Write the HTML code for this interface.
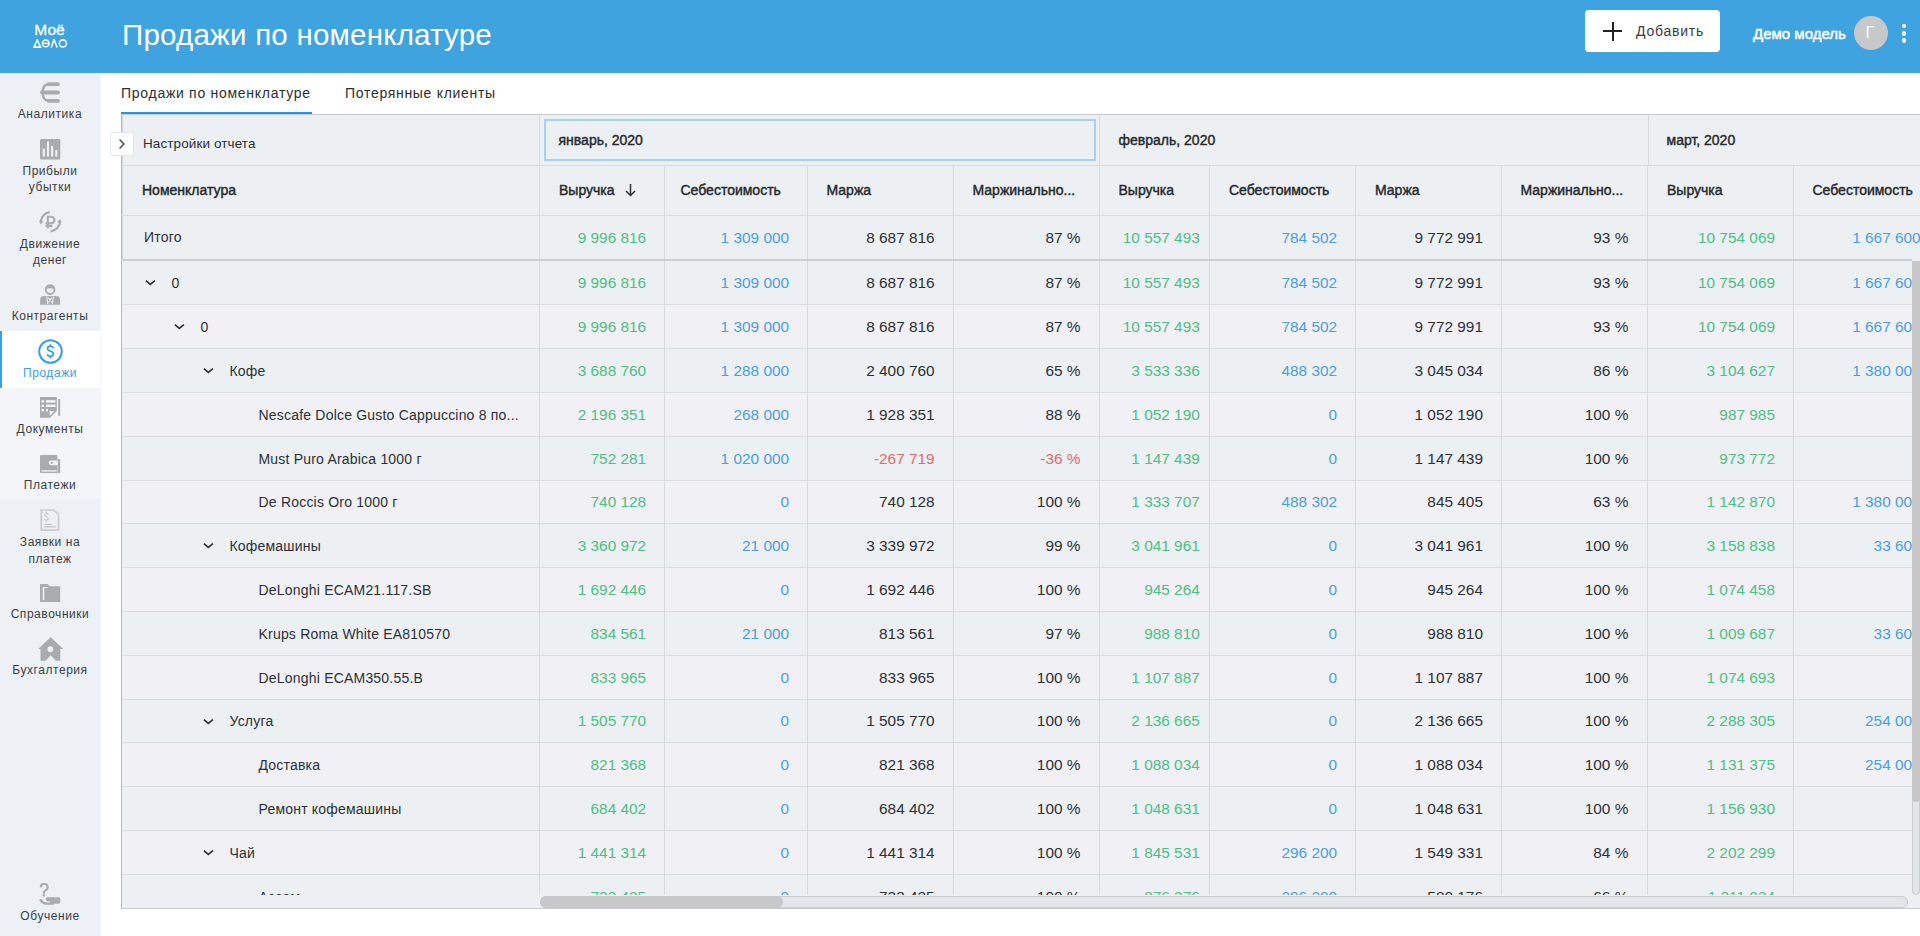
<!DOCTYPE html><html><head><meta charset="utf-8"><title>Продажи по номенклатуре</title><style>
*{box-sizing:border-box;margin:0;padding:0}
html,body{width:1920px;height:936px;overflow:hidden;background:#fff;font-family:"Liberation Sans",sans-serif;color:#2c3035}
.a{position:absolute}
.t{position:absolute;white-space:nowrap;line-height:1}
.hdr{left:0;top:0;width:1920px;height:73px;background:#3ea3de}
.sb{left:0;top:73px;width:100px;height:863px;background:#edf0f4}
.sl{position:absolute;left:0;width:100px;text-align:center;font-size:12px;letter-spacing:0.55px;color:#3b4046;line-height:16.5px;white-space:nowrap}
.ic{position:absolute;left:40px;width:21px;height:21px}
.num{position:absolute;white-space:nowrap;font-size:15.4px;line-height:20px;text-align:right}
.hd{position:absolute;white-space:nowrap;font-size:14px;line-height:16px;color:#25292d;-webkit-text-stroke:0.42px #25292d}
.nm{position:absolute;white-space:nowrap;font-size:14px;letter-spacing:0.2px;line-height:18px;color:#2c3035}
.g{color:#4cbf84} .b{color:#4a9fe0} .r{color:#e86767}
</style></head><body>
<div class="a hdr"></div>
<div class="t" style="left:34.3px;top:21.5px;font-size:15.5px;color:#fff;-webkit-text-stroke:0.3px #fff">Моё</div>
<svg class="a" style="left:33px;top:39px;width:35px;height:9px" viewBox="0 0 35 9"><g fill="none" stroke="#fff" stroke-width="1.55"><path d="M1 8.1L4.2 1L7.5 8.1Z" stroke-linejoin="miter"/><circle cx="12.7" cy="4.4" r="3.35"/><path d="M9.4 4.4H16"/><path d="M18.2 8.6L21.1 0.5L24.1 8.6"/><circle cx="29.9" cy="4.4" r="3.55"/></g></svg>
<div class="t" style="left:122px;top:20px;font-size:29.5px;color:#fff;letter-spacing:0.22px">Продажи по номенклатуре</div>
<div class="a" style="left:1585px;top:10px;width:135px;height:42px;background:#fff;border-radius:4px"></div>
<div class="a" style="left:1603px;top:30px;width:19px;height:2px;background:#222"></div>
<div class="a" style="left:1611.5px;top:22px;width:2px;height:19px;background:#222"></div>
<div class="t" style="left:1636px;top:24px;font-size:14px;letter-spacing:0.78px;color:#383b3f">Добавить</div>
<div class="t" style="left:1753px;top:25.8px;font-size:15px;color:#fff;-webkit-text-stroke:0.45px #fff">Демо модель</div>
<div class="a" style="left:1854px;top:16px;width:34px;height:34px;border-radius:50%;background:#c6c8ca"></div>
<div class="t" style="left:1865.5px;top:25px;font-size:16px;color:#fff">Г</div>
<div class="a" style="left:1901.75px;top:23.75px;width:4.5px;height:4.5px;border-radius:50%;background:#fff"></div>
<div class="a" style="left:1901.75px;top:31.25px;width:4.5px;height:4.5px;border-radius:50%;background:#fff"></div>
<div class="a" style="left:1901.75px;top:38.25px;width:4.5px;height:4.5px;border-radius:50%;background:#fff"></div>
<div class="a sb"></div>
<div class="a" style="left:100px;top:73px;width:2px;height:863px;background:linear-gradient(90deg,#f3f5f8,#fff)"></div>
<div class="a" style="left:0;top:388px;width:100px;height:111px;background:#f3f5f8"></div>
<div class="a" style="left:0;top:331px;width:100px;height:57px;background:#fff"></div>
<div class="a" style="left:0;top:331px;width:2px;height:57px;background:#3a9ee0"></div>
<svg class="a" style="left:39px;top:81px;width:23px;height:23px" viewBox="0 0 23 23"><path d="M9.5 3.2H19M3 11.5H19M9.5 19.8H19" stroke="#a9abae" stroke-width="3.8" stroke-linecap="round"/><path d="M9.5 3.2C4.5 3.5 3.6 8 3.6 11.5S4.5 19.5 9.5 19.8" fill="none" stroke="#a9abae" stroke-width="2.4"/><path d="M1 11.5L4 10v3z" fill="#a9abae"/></svg>
<svg class="a" style="left:40px;top:138.5px;width:21px;height:21px" viewBox="0 0 21 21"><rect x="0" y="0" width="20.3" height="20.5" rx="1.5" fill="#a9abae"/><rect x="2.7" y="9.5" width="2.2" height="8" fill="#edf0f4"/><rect x="6.9" y="2.4" width="2.2" height="15.1" fill="#edf0f4"/><rect x="11" y="6.9" width="2.2" height="10.6" fill="#edf0f4"/><rect x="15.2" y="11.1" width="2.2" height="6.4" fill="#edf0f4"/></svg>
<svg class="a" style="left:39px;top:211px;width:23px;height:22px" viewBox="0 0 23 22"><path d="M1.6 11.5C1.8 6.5 5.5 2 10.8 1.2" fill="none" stroke="#a9abae" stroke-width="2.2"/><path d="M0.2 9.5l1.5 4 2.8-3.3z" fill="#a9abae"/><path d="M21.2 10C21 15 17.5 19.5 11.5 20.5" fill="none" stroke="#a9abae" stroke-width="2.2"/><path d="M22.6 12l-1.5-4-2.8 3.3z" fill="#a9abae"/><path d="M8.8 17.2V5.8h3.4a3.2 3.2 0 0 1 0 6.4H6.6M6.6 14.9h6.8" fill="none" stroke="#a9abae" stroke-width="2.1"/></svg>
<svg class="a" style="left:39px;top:283px;width:23px;height:23px" viewBox="0 0 23 23"><circle cx="11.1" cy="6.6" r="4.4" fill="none" stroke="#a9abae" stroke-width="1.8"/><path d="M6.7 6.3a4.4 4.4 0 0 1 8.8 0c-1.5-1.3-7.3-1.3-8.8 0z" fill="#a9abae"/><path d="M1.1 21.7V17a4 4 0 0 1 4-4h12a4 4 0 0 1 4 4v4.7z" fill="#a9abae"/><path d="M7.8 13.5l1 7.5M14.4 13.5l-1 7.5M9.5 14.5l3.2 5M12.7 14.5l-3.2 5" stroke="#edf0f4" stroke-width="1.1"/></svg>
<svg class="a" style="left:37.5px;top:338.5px;width:25px;height:25px" viewBox="0 0 25 25"><circle cx="12.5" cy="12.5" r="11.3" fill="none" stroke="#3a9ee0" stroke-width="2"/><path d="M15.3 9.2c-.4-1.3-1.5-2-2.9-2-1.7 0-2.9 1-2.9 2.4 0 3.2 5.9 1.8 5.9 5.2 0 1.5-1.3 2.5-3 2.5-1.5 0-2.7-.8-3.1-2.1M12.4 5.2v2M12.4 17.3v2.3" fill="none" stroke="#3a9ee0" stroke-width="1.7"/></svg>
<svg class="a" style="left:40px;top:397px;width:21px;height:21px" viewBox="0 0 21 21"><path d="M0 0H16.8V14L10 20.8H0z" fill="#a9abae"/><rect x="18.2" y="2" width="2" height="16.8" fill="#a9abae"/><rect x="1.6" y="3.2" width="2.4" height="2.4" fill="#f3f5f8"/><rect x="5.9" y="3.2" width="9.6" height="2.4" fill="#f3f5f8"/><rect x="1.6" y="7.6" width="2.4" height="2.4" fill="#f3f5f8"/><rect x="5.9" y="7.6" width="9.6" height="2.4" fill="#f3f5f8"/><rect x="1.6" y="12" width="2.4" height="2.4" fill="#f3f5f8"/><rect x="6" y="12" width="2" height="2.4" fill="#f3f5f8"/><path d="M9.7 18.8V14H14.5z" fill="#f3f5f8"/></svg>
<svg class="a" style="left:40px;top:454.5px;width:21px;height:19px" viewBox="0 0 21 19"><rect x="0" y="0" width="17.4" height="18" rx="0.8" fill="#a9abae"/><rect x="17.6" y="4.2" width="2.6" height="13.8" fill="#a9abae"/><rect x="1.6" y="15.3" width="15.1" height="1.3" fill="#f3f5f8"/><path d="M11 5.5H17.6V10.2H11a2.35 2.35 0 0 1 0-4.7z" fill="#f3f5f8"/><circle cx="11.9" cy="7.85" r="1.2" fill="#a9abae"/></svg>
<svg class="a" style="left:40px;top:509px;width:21px;height:22px" viewBox="0 0 21 22"><path d="M1.3 1H13.5L18.5 5.2V21.2H1.3z" fill="none" stroke="#c8cbcf" stroke-width="1.7"/><path d="M8.3 5.8c-.3-.9-1-1.3-1.9-1.3-1.1 0-1.9.7-1.9 1.6 0 2.1 3.9 1.2 3.9 3.4 0 1-.8 1.6-2 1.6-1 0-1.7-.5-2-1.4M6.4 2.6v1.9M6.4 11.1v1.6" fill="none" stroke="#c8cbcf" stroke-width="1.2"/><path d="M4.5 15.4H12M4.5 17.8H15.8" stroke="#c8cbcf" stroke-width="1.4"/></svg>
<svg class="a" style="left:40px;top:584px;width:21px;height:18px" viewBox="0 0 21 18"><path d="M0 0H8L9.4 2.2H20.2V18H0z" fill="#a9abae"/><rect x="2.7" y="3.3" width="1.6" height="12.8" fill="#edf0f4"/><rect x="2.7" y="3.3" width="5.3" height="0.9" fill="#edf0f4"/></svg>
<svg class="a" style="left:37.5px;top:636.5px;width:26px;height:24px" viewBox="0 0 26 24"><path d="M12.7 0.3L25.2 12H22.3V23.7H17.8L12.7 18.3L7.6 23.7H2.5V12H0.2z" fill="#a9abae"/><circle cx="12.4" cy="12.2" r="2.9" fill="#edf0f4"/></svg>
<svg class="a" style="left:39px;top:883px;width:23px;height:23px" viewBox="0 0 23 23"><path d="M1.8 4.2A3.4 3.4 0 1 1 6.6 7.3C5.4 8 4.9 8.8 4.9 10.2V10.8" fill="none" stroke="#a9abae" stroke-width="2.1"/><circle cx="4.9" cy="12.4" r="1.25" fill="#a9abae"/><path d="M1.6 17.2C3.4 19.8 6 20.6 9 20.6H14" fill="none" stroke="#a9abae" stroke-width="2.4" stroke-linecap="round"/><path d="M8.2 14.2H19.5A1.8 1.8 0 0 1 21.3 16V19A1.8 1.8 0 0 1 19.5 20.8H11V18.2H9.8A2 2 0 0 1 8.2 14.2z" fill="#a9abae"/></svg>
<div class="sl" style="top:106.2px;color:#3b4046">Аналитика</div>
<div class="sl" style="top:162.7px;color:#3b4046">Прибыли<br>убытки</div>
<div class="sl" style="top:235.7px;color:#3b4046">Движение<br>денег</div>
<div class="sl" style="top:308.2px;color:#3b4046">Контрагенты</div>
<div class="sl" style="top:365.2px;color:#3a9ee0">Продажи</div>
<div class="sl" style="top:421.2px;color:#3b4046">Документы</div>
<div class="sl" style="top:477.2px;color:#3b4046">Платежи</div>
<div class="sl" style="top:534.2px;color:#3b4046">Заявки на<br>платеж</div>
<div class="sl" style="top:606.2px;color:#3b4046">Справочники</div>
<div class="sl" style="top:662.2px;color:#3b4046">Бухгалтерия</div>
<div class="sl" style="top:907.7px;color:#3b4046">Обучение</div>
<div class="t" style="left:121px;top:85.7px;font-size:14px;letter-spacing:0.72px;color:#2a2e33">Продажи по номенклатуре</div>
<div class="t" style="left:345px;top:85.7px;font-size:14px;letter-spacing:0.7px;color:#2a2e33">Потерянные клиенты</div>
<div class="a" style="left:121px;top:112px;width:191px;height:2px;background:#2a93dc"></div>
<div class="a" style="left:121px;top:114px;width:1799px;height:795px;background:#ecf0f3;border-top:1px solid #c6cacf;border-left:1px solid #b8bcc1;border-bottom:1px solid #c6cacf"></div>
<div class="a" style="left:121px;top:165px;width:1799px;height:1px;background:#d9dce1"></div>
<div class="a" style="left:121px;top:215px;width:1799px;height:1px;background:#d9dce1"></div>
<div class="a" style="left:539px;top:115px;width:1px;height:50px;background:#d6d9de"></div>
<div class="a" style="left:1099px;top:115px;width:1px;height:50px;background:#d6d9de"></div>
<div class="a" style="left:1648px;top:115px;width:1px;height:50px;background:#d6d9de"></div>
<div class="a" style="left:539px;top:166px;width:1px;height:94px;background:#d6d9de"></div>
<div class="a" style="left:664px;top:166px;width:1px;height:94px;background:#d6d9de"></div>
<div class="a" style="left:807px;top:166px;width:1px;height:94px;background:#d6d9de"></div>
<div class="a" style="left:953px;top:166px;width:1px;height:94px;background:#d6d9de"></div>
<div class="a" style="left:1099px;top:166px;width:1px;height:94px;background:#d6d9de"></div>
<div class="a" style="left:1209px;top:166px;width:1px;height:94px;background:#d6d9de"></div>
<div class="a" style="left:1355px;top:166px;width:1px;height:94px;background:#d6d9de"></div>
<div class="a" style="left:1501px;top:166px;width:1px;height:94px;background:#d6d9de"></div>
<div class="a" style="left:1647px;top:166px;width:1px;height:94px;background:#d6d9de"></div>
<div class="a" style="left:1793px;top:166px;width:1px;height:94px;background:#d6d9de"></div>
<div class="a" style="left:121px;top:259px;width:1791px;height:2px;background:#cacdd2"></div>
<div class="a" style="left:122px;top:115px;width:1px;height:793px;background:#d2d5da"></div>
<div class="a" style="left:110px;top:132px;width:24px;height:24px;background:#fff;border:1px solid #e3e6ea;border-radius:3px"></div>
<svg class="a" style="left:110px;top:132px;width:24px;height:24px" viewBox="0 0 24 24"><path d="M9.5 7.5l4.5 4.5-4.5 4.5" fill="none" stroke="#44484d" stroke-width="1.4"/></svg>
<div class="t" style="left:143px;top:137px;font-size:13.5px;letter-spacing:0.1px;color:#2a2e33">Настройки отчета</div>
<div class="a" style="left:544px;top:119px;width:552px;height:42px;border:2px solid #a9d0f1"></div>
<div class="hd" style="left:558.5px;top:131.5px">январь, 2020</div>
<div class="hd" style="left:1118.5px;top:131.5px">февраль, 2020</div>
<div class="hd" style="left:1666.5px;top:131.5px">март, 2020</div>
<div class="hd" style="left:142px;top:182px">Номенклатура</div>
<div class="hd" style="left:559px;top:182px">Выручка</div>
<div class="hd" style="left:680.5px;top:182px">Себестоимость</div>
<div class="hd" style="left:826.5px;top:182px">Маржа</div>
<div class="hd" style="left:972.5px;top:182px">Маржинально...</div>
<div class="hd" style="left:1118.5px;top:182px">Выручка</div>
<div class="hd" style="left:1229px;top:182px">Себестоимость</div>
<div class="hd" style="left:1375px;top:182px">Маржа</div>
<div class="hd" style="left:1520.5px;top:182px">Маржинально...</div>
<div class="hd" style="left:1667px;top:182px">Выручка</div>
<div class="hd" style="left:1812.5px;top:182px">Себестоимость</div>
<svg class="a" style="left:624px;top:183px;width:13px;height:14px" viewBox="0 0 13 14"><path d="M6.5 1v11.5M2 8l4.5 4.5L11 8" fill="none" stroke="#2c3035" stroke-width="1.5"/></svg>
<div class="nm" style="left:144px;top:227.9px">Итого</div>
<div class="num g" style="left:506.20000000000005px;width:140px;top:227.5px">9 996 816</div>
<div class="num b" style="left:649.1px;width:140px;top:227.5px">1 309 000</div>
<div class="num " style="left:794.7px;width:140px;top:227.5px">8 687 816</div>
<div class="num " style="left:940.5px;width:140px;top:227.5px">87 %</div>
<div class="num g" style="left:1059.8px;width:140px;top:227.5px">10 557 493</div>
<div class="num b" style="left:1197.1px;width:140px;top:227.5px">784 502</div>
<div class="num " style="left:1343.0px;width:140px;top:227.5px">9 772 991</div>
<div class="num " style="left:1488.4px;width:140px;top:227.5px">93 %</div>
<div class="num g" style="left:1635.0px;width:140px;top:227.5px">10 754 069</div>
<div class="num b" style="left:1780.7px;width:140px;top:227.5px">1 667 600</div>
<div class="a" style="left:122px;top:261px;width:1790px;height:634px;overflow:hidden">
<div class="a" style="left:0;top:0px;width:1800px;height:43px;background:#ecf0f3"></div>
<div class="a" style="left:0;top:44px;width:1800px;height:43px;background:#f1f0f5"></div>
<div class="a" style="left:0;top:88px;width:1800px;height:43px;background:#ecf0f3"></div>
<div class="a" style="left:0;top:132px;width:1800px;height:43px;background:#f1f0f5"></div>
<div class="a" style="left:0;top:176px;width:1800px;height:43px;background:#ecf0f3"></div>
<div class="a" style="left:0;top:220px;width:1800px;height:42px;background:#f1f0f5"></div>
<div class="a" style="left:0;top:263px;width:1800px;height:43px;background:#ecf0f3"></div>
<div class="a" style="left:0;top:307px;width:1800px;height:43px;background:#f1f0f5"></div>
<div class="a" style="left:0;top:351px;width:1800px;height:43px;background:#ecf0f3"></div>
<div class="a" style="left:0;top:395px;width:1800px;height:43px;background:#f1f0f5"></div>
<div class="a" style="left:0;top:439px;width:1800px;height:42px;background:#ecf0f3"></div>
<div class="a" style="left:0;top:482px;width:1800px;height:43px;background:#f1f0f5"></div>
<div class="a" style="left:0;top:526px;width:1800px;height:43px;background:#ecf0f3"></div>
<div class="a" style="left:0;top:570px;width:1800px;height:43px;background:#f1f0f5"></div>
<div class="a" style="left:0;top:614px;width:1800px;height:43px;background:#ecf0f3"></div>
<div class="a" style="left:0;top:43px;width:1800px;height:1px;background:#d9dce1"></div>
<div class="a" style="left:0;top:87px;width:1800px;height:1px;background:#d9dce1"></div>
<div class="a" style="left:0;top:131px;width:1800px;height:1px;background:#d9dce1"></div>
<div class="a" style="left:0;top:175px;width:1800px;height:1px;background:#d9dce1"></div>
<div class="a" style="left:0;top:219px;width:1800px;height:1px;background:#d9dce1"></div>
<div class="a" style="left:0;top:262px;width:1800px;height:1px;background:#d9dce1"></div>
<div class="a" style="left:0;top:306px;width:1800px;height:1px;background:#d9dce1"></div>
<div class="a" style="left:0;top:350px;width:1800px;height:1px;background:#d9dce1"></div>
<div class="a" style="left:0;top:394px;width:1800px;height:1px;background:#d9dce1"></div>
<div class="a" style="left:0;top:438px;width:1800px;height:1px;background:#d9dce1"></div>
<div class="a" style="left:0;top:481px;width:1800px;height:1px;background:#d9dce1"></div>
<div class="a" style="left:0;top:525px;width:1800px;height:1px;background:#d9dce1"></div>
<div class="a" style="left:0;top:569px;width:1800px;height:1px;background:#d9dce1"></div>
<div class="a" style="left:0;top:613px;width:1800px;height:1px;background:#d9dce1"></div>
<div class="a" style="left:0;top:657px;width:1800px;height:1px;background:#d9dce1"></div>
<div class="a" style="left:417px;top:0;width:1px;height:634px;background:#d6d9de"></div>
<div class="a" style="left:542px;top:0;width:1px;height:634px;background:#d6d9de"></div>
<div class="a" style="left:685px;top:0;width:1px;height:634px;background:#d6d9de"></div>
<div class="a" style="left:831px;top:0;width:1px;height:634px;background:#d6d9de"></div>
<div class="a" style="left:977px;top:0;width:1px;height:634px;background:#d6d9de"></div>
<div class="a" style="left:1087px;top:0;width:1px;height:634px;background:#d6d9de"></div>
<div class="a" style="left:1233px;top:0;width:1px;height:634px;background:#d6d9de"></div>
<div class="a" style="left:1379px;top:0;width:1px;height:634px;background:#d6d9de"></div>
<div class="a" style="left:1525px;top:0;width:1px;height:634px;background:#d6d9de"></div>
<div class="a" style="left:1671px;top:0;width:1px;height:634px;background:#d6d9de"></div>
<svg class="a" style="left:22.5px;top:18.0px;width:11px;height:7px" viewBox="0 0 11 7"><path d="M0.9 1.6L5.3 5.3L9.9 1.6" fill="none" stroke="#2f3338" stroke-width="1.7"/></svg>
<div class="nm" style="left:49.5px;top:12.9px">0</div>
<div class="num g" style="left:384.20000000000005px;width:140px;top:11.5px">9 996 816</div>
<div class="num b" style="left:527.1px;width:140px;top:11.5px">1 309 000</div>
<div class="num " style="left:672.7px;width:140px;top:11.5px">8 687 816</div>
<div class="num " style="left:818.5px;width:140px;top:11.5px">87 %</div>
<div class="num g" style="left:937.8px;width:140px;top:11.5px">10 557 493</div>
<div class="num b" style="left:1075.1px;width:140px;top:11.5px">784 502</div>
<div class="num " style="left:1221.0px;width:140px;top:11.5px">9 772 991</div>
<div class="num " style="left:1366.4px;width:140px;top:11.5px">93 %</div>
<div class="num g" style="left:1513.0px;width:140px;top:11.5px">10 754 069</div>
<div class="num b" style="left:1658.7px;width:140px;top:11.5px">1 667 600</div>
<svg class="a" style="left:51.5px;top:62.0px;width:11px;height:7px" viewBox="0 0 11 7"><path d="M0.9 1.6L5.3 5.3L9.9 1.6" fill="none" stroke="#2f3338" stroke-width="1.7"/></svg>
<div class="nm" style="left:78.5px;top:56.9px">0</div>
<div class="num g" style="left:384.20000000000005px;width:140px;top:55.5px">9 996 816</div>
<div class="num b" style="left:527.1px;width:140px;top:55.5px">1 309 000</div>
<div class="num " style="left:672.7px;width:140px;top:55.5px">8 687 816</div>
<div class="num " style="left:818.5px;width:140px;top:55.5px">87 %</div>
<div class="num g" style="left:937.8px;width:140px;top:55.5px">10 557 493</div>
<div class="num b" style="left:1075.1px;width:140px;top:55.5px">784 502</div>
<div class="num " style="left:1221.0px;width:140px;top:55.5px">9 772 991</div>
<div class="num " style="left:1366.4px;width:140px;top:55.5px">93 %</div>
<div class="num g" style="left:1513.0px;width:140px;top:55.5px">10 754 069</div>
<div class="num b" style="left:1658.7px;width:140px;top:55.5px">1 667 600</div>
<svg class="a" style="left:80.5px;top:106.0px;width:11px;height:7px" viewBox="0 0 11 7"><path d="M0.9 1.6L5.3 5.3L9.9 1.6" fill="none" stroke="#2f3338" stroke-width="1.7"/></svg>
<div class="nm" style="left:107.5px;top:100.9px">Кофе</div>
<div class="num g" style="left:384.20000000000005px;width:140px;top:99.5px">3 688 760</div>
<div class="num b" style="left:527.1px;width:140px;top:99.5px">1 288 000</div>
<div class="num " style="left:672.7px;width:140px;top:99.5px">2 400 760</div>
<div class="num " style="left:818.5px;width:140px;top:99.5px">65 %</div>
<div class="num g" style="left:937.8px;width:140px;top:99.5px">3 533 336</div>
<div class="num b" style="left:1075.1px;width:140px;top:99.5px">488 302</div>
<div class="num " style="left:1221.0px;width:140px;top:99.5px">3 045 034</div>
<div class="num " style="left:1366.4px;width:140px;top:99.5px">86 %</div>
<div class="num g" style="left:1513.0px;width:140px;top:99.5px">3 104 627</div>
<div class="num b" style="left:1658.7px;width:140px;top:99.5px">1 380 000</div>
<div class="nm" style="left:136.5px;top:144.9px">Nescafe Dolce Gusto Cappuccino 8 по...</div>
<div class="num g" style="left:384.20000000000005px;width:140px;top:143.5px">2 196 351</div>
<div class="num b" style="left:527.1px;width:140px;top:143.5px">268 000</div>
<div class="num " style="left:672.7px;width:140px;top:143.5px">1 928 351</div>
<div class="num " style="left:818.5px;width:140px;top:143.5px">88 %</div>
<div class="num g" style="left:937.8px;width:140px;top:143.5px">1 052 190</div>
<div class="num b" style="left:1075.1px;width:140px;top:143.5px">0</div>
<div class="num " style="left:1221.0px;width:140px;top:143.5px">1 052 190</div>
<div class="num " style="left:1366.4px;width:140px;top:143.5px">100 %</div>
<div class="num g" style="left:1513.0px;width:140px;top:143.5px">987 985</div>
<div class="num b" style="left:1658.7px;width:140px;top:143.5px">0</div>
<div class="nm" style="left:136.5px;top:188.9px">Must Puro Arabica 1000 г</div>
<div class="num g" style="left:384.20000000000005px;width:140px;top:187.5px">752 281</div>
<div class="num b" style="left:527.1px;width:140px;top:187.5px">1 020 000</div>
<div class="num r" style="left:672.7px;width:140px;top:187.5px">-267 719</div>
<div class="num r" style="left:818.5px;width:140px;top:187.5px">-36 %</div>
<div class="num g" style="left:937.8px;width:140px;top:187.5px">1 147 439</div>
<div class="num b" style="left:1075.1px;width:140px;top:187.5px">0</div>
<div class="num " style="left:1221.0px;width:140px;top:187.5px">1 147 439</div>
<div class="num " style="left:1366.4px;width:140px;top:187.5px">100 %</div>
<div class="num g" style="left:1513.0px;width:140px;top:187.5px">973 772</div>
<div class="num b" style="left:1658.7px;width:140px;top:187.5px">0</div>
<div class="nm" style="left:136.5px;top:232.4px">De Roccis Oro 1000 г</div>
<div class="num g" style="left:384.20000000000005px;width:140px;top:231.0px">740 128</div>
<div class="num b" style="left:527.1px;width:140px;top:231.0px">0</div>
<div class="num " style="left:672.7px;width:140px;top:231.0px">740 128</div>
<div class="num " style="left:818.5px;width:140px;top:231.0px">100 %</div>
<div class="num g" style="left:937.8px;width:140px;top:231.0px">1 333 707</div>
<div class="num b" style="left:1075.1px;width:140px;top:231.0px">488 302</div>
<div class="num " style="left:1221.0px;width:140px;top:231.0px">845 405</div>
<div class="num " style="left:1366.4px;width:140px;top:231.0px">63 %</div>
<div class="num g" style="left:1513.0px;width:140px;top:231.0px">1 142 870</div>
<div class="num b" style="left:1658.7px;width:140px;top:231.0px">1 380 000</div>
<svg class="a" style="left:80.5px;top:281.0px;width:11px;height:7px" viewBox="0 0 11 7"><path d="M0.9 1.6L5.3 5.3L9.9 1.6" fill="none" stroke="#2f3338" stroke-width="1.7"/></svg>
<div class="nm" style="left:107.5px;top:275.9px">Кофемашины</div>
<div class="num g" style="left:384.20000000000005px;width:140px;top:274.5px">3 360 972</div>
<div class="num b" style="left:527.1px;width:140px;top:274.5px">21 000</div>
<div class="num " style="left:672.7px;width:140px;top:274.5px">3 339 972</div>
<div class="num " style="left:818.5px;width:140px;top:274.5px">99 %</div>
<div class="num g" style="left:937.8px;width:140px;top:274.5px">3 041 961</div>
<div class="num b" style="left:1075.1px;width:140px;top:274.5px">0</div>
<div class="num " style="left:1221.0px;width:140px;top:274.5px">3 041 961</div>
<div class="num " style="left:1366.4px;width:140px;top:274.5px">100 %</div>
<div class="num g" style="left:1513.0px;width:140px;top:274.5px">3 158 838</div>
<div class="num b" style="left:1658.7px;width:140px;top:274.5px">33 600</div>
<div class="nm" style="left:136.5px;top:319.9px">DeLonghi ECAM21.117.SB</div>
<div class="num g" style="left:384.20000000000005px;width:140px;top:318.5px">1 692 446</div>
<div class="num b" style="left:527.1px;width:140px;top:318.5px">0</div>
<div class="num " style="left:672.7px;width:140px;top:318.5px">1 692 446</div>
<div class="num " style="left:818.5px;width:140px;top:318.5px">100 %</div>
<div class="num g" style="left:937.8px;width:140px;top:318.5px">945 264</div>
<div class="num b" style="left:1075.1px;width:140px;top:318.5px">0</div>
<div class="num " style="left:1221.0px;width:140px;top:318.5px">945 264</div>
<div class="num " style="left:1366.4px;width:140px;top:318.5px">100 %</div>
<div class="num g" style="left:1513.0px;width:140px;top:318.5px">1 074 458</div>
<div class="num b" style="left:1658.7px;width:140px;top:318.5px">0</div>
<div class="nm" style="left:136.5px;top:363.9px">Krups Roma White EA810570</div>
<div class="num g" style="left:384.20000000000005px;width:140px;top:362.5px">834 561</div>
<div class="num b" style="left:527.1px;width:140px;top:362.5px">21 000</div>
<div class="num " style="left:672.7px;width:140px;top:362.5px">813 561</div>
<div class="num " style="left:818.5px;width:140px;top:362.5px">97 %</div>
<div class="num g" style="left:937.8px;width:140px;top:362.5px">988 810</div>
<div class="num b" style="left:1075.1px;width:140px;top:362.5px">0</div>
<div class="num " style="left:1221.0px;width:140px;top:362.5px">988 810</div>
<div class="num " style="left:1366.4px;width:140px;top:362.5px">100 %</div>
<div class="num g" style="left:1513.0px;width:140px;top:362.5px">1 009 687</div>
<div class="num b" style="left:1658.7px;width:140px;top:362.5px">33 600</div>
<div class="nm" style="left:136.5px;top:407.9px">DeLonghi ECAM350.55.B</div>
<div class="num g" style="left:384.20000000000005px;width:140px;top:406.5px">833 965</div>
<div class="num b" style="left:527.1px;width:140px;top:406.5px">0</div>
<div class="num " style="left:672.7px;width:140px;top:406.5px">833 965</div>
<div class="num " style="left:818.5px;width:140px;top:406.5px">100 %</div>
<div class="num g" style="left:937.8px;width:140px;top:406.5px">1 107 887</div>
<div class="num b" style="left:1075.1px;width:140px;top:406.5px">0</div>
<div class="num " style="left:1221.0px;width:140px;top:406.5px">1 107 887</div>
<div class="num " style="left:1366.4px;width:140px;top:406.5px">100 %</div>
<div class="num g" style="left:1513.0px;width:140px;top:406.5px">1 074 693</div>
<div class="num b" style="left:1658.7px;width:140px;top:406.5px">0</div>
<svg class="a" style="left:80.5px;top:456.5px;width:11px;height:7px" viewBox="0 0 11 7"><path d="M0.9 1.6L5.3 5.3L9.9 1.6" fill="none" stroke="#2f3338" stroke-width="1.7"/></svg>
<div class="nm" style="left:107.5px;top:451.4px">Услуга</div>
<div class="num g" style="left:384.20000000000005px;width:140px;top:450.0px">1 505 770</div>
<div class="num b" style="left:527.1px;width:140px;top:450.0px">0</div>
<div class="num " style="left:672.7px;width:140px;top:450.0px">1 505 770</div>
<div class="num " style="left:818.5px;width:140px;top:450.0px">100 %</div>
<div class="num g" style="left:937.8px;width:140px;top:450.0px">2 136 665</div>
<div class="num b" style="left:1075.1px;width:140px;top:450.0px">0</div>
<div class="num " style="left:1221.0px;width:140px;top:450.0px">2 136 665</div>
<div class="num " style="left:1366.4px;width:140px;top:450.0px">100 %</div>
<div class="num g" style="left:1513.0px;width:140px;top:450.0px">2 288 305</div>
<div class="num b" style="left:1658.7px;width:140px;top:450.0px">254 000</div>
<div class="nm" style="left:136.5px;top:494.9px">Доставка</div>
<div class="num g" style="left:384.20000000000005px;width:140px;top:493.5px">821 368</div>
<div class="num b" style="left:527.1px;width:140px;top:493.5px">0</div>
<div class="num " style="left:672.7px;width:140px;top:493.5px">821 368</div>
<div class="num " style="left:818.5px;width:140px;top:493.5px">100 %</div>
<div class="num g" style="left:937.8px;width:140px;top:493.5px">1 088 034</div>
<div class="num b" style="left:1075.1px;width:140px;top:493.5px">0</div>
<div class="num " style="left:1221.0px;width:140px;top:493.5px">1 088 034</div>
<div class="num " style="left:1366.4px;width:140px;top:493.5px">100 %</div>
<div class="num g" style="left:1513.0px;width:140px;top:493.5px">1 131 375</div>
<div class="num b" style="left:1658.7px;width:140px;top:493.5px">254 000</div>
<div class="nm" style="left:136.5px;top:538.9px">Ремонт кофемашины</div>
<div class="num g" style="left:384.20000000000005px;width:140px;top:537.5px">684 402</div>
<div class="num b" style="left:527.1px;width:140px;top:537.5px">0</div>
<div class="num " style="left:672.7px;width:140px;top:537.5px">684 402</div>
<div class="num " style="left:818.5px;width:140px;top:537.5px">100 %</div>
<div class="num g" style="left:937.8px;width:140px;top:537.5px">1 048 631</div>
<div class="num b" style="left:1075.1px;width:140px;top:537.5px">0</div>
<div class="num " style="left:1221.0px;width:140px;top:537.5px">1 048 631</div>
<div class="num " style="left:1366.4px;width:140px;top:537.5px">100 %</div>
<div class="num g" style="left:1513.0px;width:140px;top:537.5px">1 156 930</div>
<div class="num b" style="left:1658.7px;width:140px;top:537.5px">0</div>
<svg class="a" style="left:80.5px;top:588.0px;width:11px;height:7px" viewBox="0 0 11 7"><path d="M0.9 1.6L5.3 5.3L9.9 1.6" fill="none" stroke="#2f3338" stroke-width="1.7"/></svg>
<div class="nm" style="left:107.5px;top:582.9px">Чай</div>
<div class="num g" style="left:384.20000000000005px;width:140px;top:581.5px">1 441 314</div>
<div class="num b" style="left:527.1px;width:140px;top:581.5px">0</div>
<div class="num " style="left:672.7px;width:140px;top:581.5px">1 441 314</div>
<div class="num " style="left:818.5px;width:140px;top:581.5px">100 %</div>
<div class="num g" style="left:937.8px;width:140px;top:581.5px">1 845 531</div>
<div class="num b" style="left:1075.1px;width:140px;top:581.5px">296 200</div>
<div class="num " style="left:1221.0px;width:140px;top:581.5px">1 549 331</div>
<div class="num " style="left:1366.4px;width:140px;top:581.5px">84 %</div>
<div class="num g" style="left:1513.0px;width:140px;top:581.5px">2 202 299</div>
<div class="num b" style="left:1658.7px;width:140px;top:581.5px">0</div>
<div class="nm" style="left:136.5px;top:626.9px">Ассам</div>
<div class="num g" style="left:384.20000000000005px;width:140px;top:625.5px">733 425</div>
<div class="num b" style="left:527.1px;width:140px;top:625.5px">0</div>
<div class="num " style="left:672.7px;width:140px;top:625.5px">733 425</div>
<div class="num " style="left:818.5px;width:140px;top:625.5px">100 %</div>
<div class="num g" style="left:937.8px;width:140px;top:625.5px">876 376</div>
<div class="num b" style="left:1075.1px;width:140px;top:625.5px">296 200</div>
<div class="num " style="left:1221.0px;width:140px;top:625.5px">580 176</div>
<div class="num " style="left:1366.4px;width:140px;top:625.5px">66 %</div>
<div class="num g" style="left:1513.0px;width:140px;top:625.5px">1 311 034</div>
<div class="num b" style="left:1658.7px;width:140px;top:625.5px">0</div>
</div>
<div class="a" style="left:122px;top:895px;width:1798px;height:13px;background:#ecf0f3"></div>
<div class="a" style="left:1912px;top:261px;width:8px;height:634px;background:#e3e6e9;border:1px solid #c9ccd0;border-radius:4px"></div>
<div class="a" style="left:1912px;top:261px;width:8px;height:541px;border-radius:0 0 4px 4px;background:#c6c6c7"></div>
<div class="a" style="left:540px;top:895.5px;width:1368px;height:12.5px;border-radius:6px;background:#e3e6e9;border:1px solid #c9ccd0"></div>
<div class="a" style="left:540px;top:895.5px;width:243px;height:12.5px;border-radius:6px;background:#c8c8c9"></div>
</body></html>
